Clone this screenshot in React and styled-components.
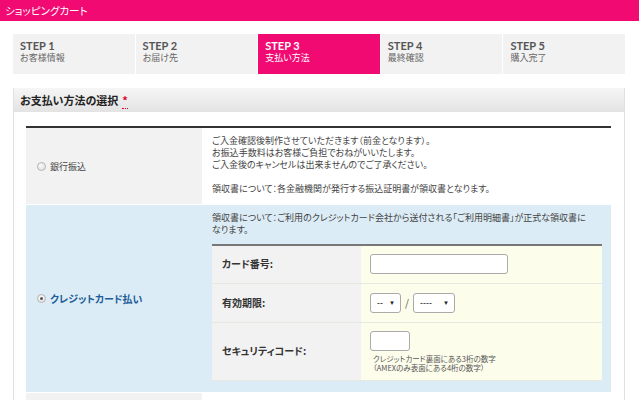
import styled, { createGlobalStyle } from 'styled-components';

const GlobalStyle = createGlobalStyle`
  body {
    margin: 0;
    background: #fff;
    color: #333;
    font-family: "Noto Sans CJK JP", "Noto Sans", sans-serif;
    font-feature-settings: "palt";
  }
`;

const Header = styled.header`
  height: 21px;
  background: #f20a73;
  color: #fff;
  font-size: 10.5px;
  line-height: 21px;
  padding-left: 5px;
`;

const Main = styled.div`
  padding: 13px 14px 0 13px;
`;

const Steps = styled.ol`
  display: flex;
  gap: 1px;
  list-style: none;
  margin: 0;
  padding: 0;
  height: 40px;
`;

const Step = styled.li`
  flex: 1;
  padding: 5px 7px;
  background: ${(p) => (p.$active ? '#f20a73' : '#f2f2f2')};
  color: ${(p) => (p.$active ? '#fff' : '#666')};
`;

const StepNum = styled.div`
  font-family: Lato, "Liberation Sans", sans-serif;
  font-weight: 700;
  font-size: 11px;
  line-height: 13px;
  color: ${(p) => (p.$active ? '#fff' : '#555')};
`;

const StepName = styled.div`
  font-size: 9px;
  line-height: 12px;
`;

const Panel = styled.section`
  margin-top: 14px;
  border: 1px solid #e0e0e0;
  border-top: none;
`;

const PanelHead = styled.h2`
  margin: 0;
  height: 24px;
  padding-left: 6px;
  background: linear-gradient(#f6f6f6, #e3e3e3);
  font-size: 11px;
  font-weight: 700;
  line-height: 24px;
  color: #222;
`;

const Required = styled.span`
  margin-left: 4px;
  color: #e4002b;
  border-bottom: 1px dotted #e4002b;
`;

const PanelBody = styled.div`
  padding: 14px 13px 0 12px;
`;

const PayTable = styled.table`
  width: 100%;
  border-collapse: collapse;
  border-top: 2px solid #333;
`;

const PayRow = styled.tr`
  background: ${(p) => (p.$selected ? '#dcecf6' : 'transparent')};
  border-top: 1px solid #fff;
`;

const MethodCell = styled.th`
  box-sizing: border-box;
  width: 176px;
  padding: 0 0 0 11px;
  text-align: left;
  vertical-align: middle;
  background: ${(p) => (p.$selected ? 'transparent' : '#f2f2f2')};
`;

const MethodLabel = styled.label`
  display: flex;
  align-items: center;
  gap: 4px;
  font-size: ${(p) => (p.$selected ? '10px' : '9px')};
  font-weight: ${(p) => (p.$selected ? 700 : 400)};
  color: ${(p) => (p.$selected ? '#1d5d99' : '#444')};
`;

const Radio = styled.span`
  position: relative;
  width: 7px;
  height: 7px;
  border-radius: 50%;
  border: 1px solid #b5b5b5;
  background: radial-gradient(circle at 40% 35%, #fafafa, #dcdcdc);

  &::after {
    content: '';
    display: ${(p) => (p.$checked ? 'block' : 'none')};
    position: absolute;
    left: 2px;
    top: 2px;
    width: 3px;
    height: 3px;
    border-radius: 50%;
    background: #555;
  }
`;

const InfoCell = styled.td`
  padding: ${(p) => (p.$selected ? '7px 9px 11px 9px' : `${p.$top || 7}px 9px 9px 9px`)};
  vertical-align: top;
  background: ${(p) => (p.$selected ? 'transparent' : '#fff')};
  font-size: 9px;
  line-height: 12px;
  color: #444;
`;

const Note = styled.p`
  margin: ${(p) => (p.$gap ? '12px 0 0' : '0')};
  padding-left: 1px;
`;

const CardTable = styled.table`
  width: calc(100% - 1px);
  margin-top: 8px;
  margin-left: 1px;
  border-collapse: collapse;
  border-top: 2px solid #777;
`;

const CardRow = styled.tr`
  height: ${(p) => p.$h}px;
  border-bottom: 1px solid #e8e8e2;
`;

const CardLabel = styled.th`
  box-sizing: border-box;
  width: 149px;
  padding: 0 0 0 10px;
  text-align: left;
  background: #f2f2f2;
  font-size: 10px;
  font-weight: 700;
  color: #333;
`;

const CardValue = styled.td`
  padding: 0 0 0 9px;
  background: #fdfdec;
  vertical-align: middle;
`;

const Input = styled.input`
  display: block;
  box-sizing: border-box;
  width: ${(p) => p.$w}px;
  height: 20px;
  margin: 0;
  border: 1px solid #aaa;
  border-radius: 3px;
  background: #fff;
`;

const Expiry = styled.div`
  display: flex;
  align-items: center;
  gap: 4px;
  font-size: 10px;
  color: #555;
`;

const Select = styled.div`
  box-sizing: border-box;
  display: flex;
  align-items: center;
  justify-content: space-between;
  width: ${(p) => p.$w}px;
  height: 20px;
  padding: 0 5px 0 6px;
  border: 1px solid #aaa;
  border-radius: 3px;
  background: #fff;
  font-family: "Liberation Sans", sans-serif;
  font-size: 9px;
  color: #222;
`;

const Caret = styled.span`
  font-size: 6px;
  color: #222;
`;

const Hint = styled.div`
  margin-top: 3px;
  padding-left: 3px;
  font-size: 7.5px;
  line-height: 9px;
  color: #555;
`;

const steps = [
  ['STEP 1', 'お客様情報'],
  ['STEP 2', 'お届け先'],
  ['STEP 3', '支払い方法'],
  ['STEP 4', '最終確認'],
  ['STEP 5', '購入完了'],
];

export default function App() {
  return (
    <>
      <GlobalStyle />
      <Header>ショッピングカート</Header>
      <Main>
        <Steps>
          {steps.map(([num, name], i) => (
            <Step key={num} $active={i === 2}>
              <StepNum $active={i === 2}>{num}</StepNum>
              <StepName>{name}</StepName>
            </Step>
          ))}
        </Steps>

        <Panel>
          <PanelHead>
            お支払い方法の選択<Required>*</Required>
          </PanelHead>
          <PanelBody>
            <PayTable>
              <tbody>
                <PayRow>
                  <MethodCell>
                    <MethodLabel>
                      <Radio />
                      銀行振込
                    </MethodLabel>
                  </MethodCell>
                  <InfoCell>
                    <Note>
                      ご入金確認後制作させていただきます（前金となります）。
                      <br />
                      お振込手数料はお客様ご負担でおねがいいたします。
                      <br />
                      ご入金後のキャンセルは出来ませんのでご了承ください。
                    </Note>
                    <Note $gap>領収書について：各金融機関が発行する振込証明書が領収書となります。</Note>
                  </InfoCell>
                </PayRow>

                <PayRow $selected>
                  <MethodCell $selected>
                    <MethodLabel $selected>
                      <Radio $checked />
                      クレジットカード払い
                    </MethodLabel>
                  </MethodCell>
                  <InfoCell $selected>
                    <Note>
                      領収書について：ご利用のクレジットカード会社から送付される「ご利用明細書」が正式な領収書に
                      <br />
                      なります。
                    </Note>
                    <CardTable>
                      <tbody>
                        <CardRow $h={38}>
                          <CardLabel>カード番号:</CardLabel>
                          <CardValue>
                            <Input $w={138} type="text" />
                          </CardValue>
                        </CardRow>
                        <CardRow $h={39}>
                          <CardLabel>有効期限:</CardLabel>
                          <CardValue>
                            <Expiry>
                              <Select $w={31}>
                                -- <Caret>▼</Caret>
                              </Select>
                              /
                              <Select $w={42}>
                                ---- <Caret>▼</Caret>
                              </Select>
                            </Expiry>
                          </CardValue>
                        </CardRow>
                        <CardRow $h={58}>
                          <CardLabel>セキュリティコード:</CardLabel>
                          <CardValue>
                            <Input $w={40} type="text" />
                            <Hint>
                              クレジットカード裏面にある3桁の数字
                              <br />
                              （AMEXのみ表面にある4桁の数字）
                            </Hint>
                          </CardValue>
                        </CardRow>
                      </tbody>
                    </CardTable>
                  </InfoCell>
                </PayRow>

                <PayRow>
                  <MethodCell>
                    <MethodLabel>
                      <Radio />
                      代金引換
                    </MethodLabel>
                  </MethodCell>
                  <InfoCell $top={16}>
                    <Note>商品お届け時に配送業者へ代金をお支払いください。</Note>
                    <Note $gap>領収書について：配送業者が発行する受領書が領収書となります。</Note>
                  </InfoCell>
                </PayRow>
              </tbody>
            </PayTable>
          </PanelBody>
        </Panel>
      </Main>
    </>
  );
}
